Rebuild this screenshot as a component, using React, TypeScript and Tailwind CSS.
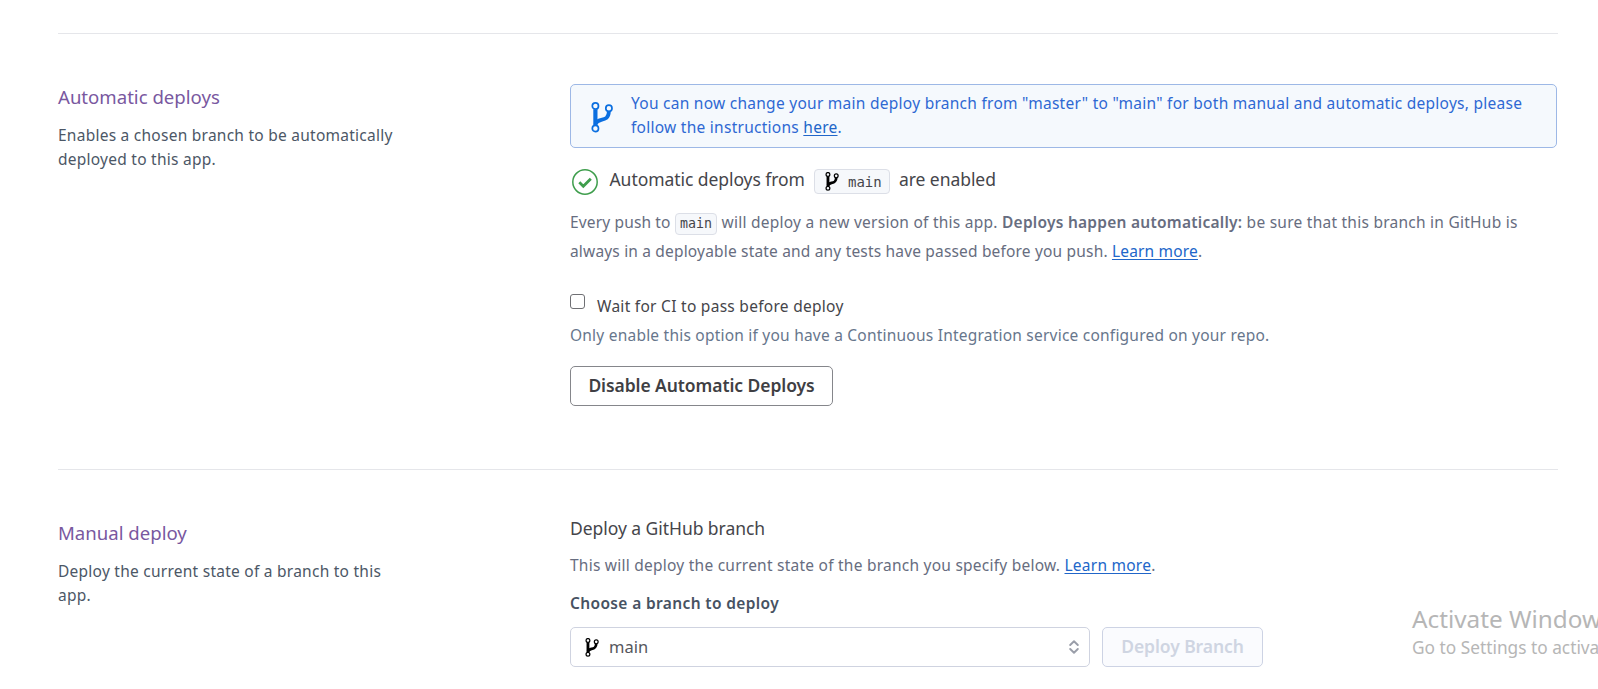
import React from "react";

function BranchIcon({ className, bold = false }: { className?: string; bold?: boolean }) {
  return (
    <svg viewBox="0 0 22 31" fill="none" stroke="currentColor" className={className}>
      <path d="M4.4 7.2V23.2" strokeWidth={bold ? 4.6 : 4.2} />
      <path d="M17.9 9.2c-.2 7-3.700 7.800-7.600 8.600-3.200.7-5 1.600-5.800 4.200" strokeWidth={bold ? 4.4 : 3.8} />
      <circle cx="4.400" cy="4" r="3.100" strokeWidth={bold ? 2 : 1.7} />
      <circle cx="17.900" cy="6.300" r="3.100" strokeWidth={bold ? 2 : 1.7} />
      <circle cx="4.400" cy="26.500" r="3.100" strokeWidth={bold ? 2 : 1.7} />
    </svg>
  );
}

function CheckIcon() {
  return (
    <svg viewBox="0 0 26 26" fill="none" className="h-[26px] w-[26px] text-[#3f9e4d]" stroke="currentColor">
      <circle cx="13" cy="13" r="12.200" strokeWidth="1.500" />
      <path d="M7.300 13.300l4 3.900 7.500-7.500" strokeWidth="2.800" />
    </svg>
  );
}

function SortIcon() {
  return (
    <svg viewBox="0 0 10 14" fill="none" stroke="currentColor" strokeWidth="1.900" strokeLinecap="round" strokeLinejoin="round" className="h-[14px] w-[10px] text-[#9a9ea9]">
      <path d="M1.200 5L5 1.300 8.800 5" />
      <path d="M1.200 9L5 12.700 8.800 9" />
    </svg>
  );
}

function Link({ children }: { children: React.ReactNode }) {
  return (
    <a href="#" className="text-[#2166c9] underline decoration-1 underline-offset-[1.5px]">
      {children}
    </a>
  );
}

function Section({ title, lines, children }: { title: string; lines: string[]; children: React.ReactNode }) {
  return (
    <section className="flex border-t border-[#e5e6ea] pt-[50px]">
      <div className="w-[512px] shrink-0">
        <h2 className="pt-px text-[18.6px] leading-6 text-[#79589f]">{title}</h2>
        <p className="mt-[14px] text-[15.5px] leading-6 tracking-[0.25px] text-[#4c5766]">
          {lines.map((line) => (
            <span key={line} className="block">
              {line}
            </span>
          ))}
        </p>
      </div>
      <div className="w-[987px] shrink-0">{children}</div>
    </section>
  );
}

export default function App() {
  return (
    <div className="relative h-[689px] w-full overflow-hidden bg-white pt-[33px] pl-[58px] font-['Noto_Sans',sans-serif] whitespace-nowrap">
      <main className="w-[1500px]">
        <div className="h-[436px]">
          <Section title="Automatic deploys" lines={["Enables a chosen branch to be automatically", "deployed to this app."]}>
            <div className="flex h-16 rounded-[5px] border border-[#9db8e6] bg-[#f5f9fd] pt-1.5 text-[#2e68d3]">
              <BranchIcon className="mt-[11px] ml-5 h-[31px] w-[22px] text-[#0b6fe0]" />
              <p className="ml-[18px] text-[15.5px] leading-6 tracking-[0.265px]">
                You can now change your main deploy branch from "master" to "main" for both manual and automatic deploys, please
                <br />
                follow the instructions <Link>here</Link>.
              </p>
            </div>
            <div className="mt-[19px] flex h-7 items-start text-[17.5px] leading-6 tracking-[-0.06px] text-[#45454a]">
              <div className="mt-0.5 ml-0.5">
                <CheckIcon />
              </div>
              <span className="ml-[11.5px] w-[195px]">Automatic deploys from</span>
              <span className="mt-0.5 ml-[9.5px] flex h-[25px] w-[76px] items-center rounded-[4px] border border-[#dcdfe7] bg-[#f6f8fb] pl-2.5">
                <BranchIcon bold className="h-[19px] w-[14px] text-black" />
                <span className="ml-[9px] font-['DejaVu_Sans_Mono',monospace] text-[14px] leading-5 tracking-normal">main</span>
              </span>
              <span className="ml-[9px]">are enabled</span>
            </div>
            <div className="mt-[13px] text-[15.5px] leading-[29px] tracking-[0.25px] text-[#676d80]">
              <p className="flex h-[29px] items-start">
                <span className="w-[105px] tracking-[0.15px]">Every push to</span>
                <code className="mt-[5px] flex h-[22px] w-[42px] items-center justify-center rounded-[4px] border border-[#dcdfe7] bg-[#f6f8fb] font-['DejaVu_Sans_Mono',monospace] text-[13.3px] leading-5 tracking-normal text-[#45454a]">
                  main
                </code>
                <span className="ml-[4.5px]">
                  will deploy a new version of this app. <strong className="font-semibold">Deploys happen automatically:</strong> be sure that this branch in GitHub is
                </span>
              </p>
              <p className="tracking-[0.175px]">
                always in a deployable state and any tests have passed before you push. <Link>Learn more</Link>.
              </p>
            </div>
            <label className="mt-[28px] flex items-start text-[15.5px] leading-6 text-[#45454a]">
              <input type="checkbox" className="h-[15px] w-[15px] appearance-none rounded-[3px] border border-[#6f7074] bg-white" />
              <span className="ml-3 tracking-[0.28px]">Wait for CI to pass before deploy</span>
            </label>
            <p className="mt-[5px] text-[15.5px] leading-6 tracking-[0.22px] text-[#67768c]">
              Only enable this option if you have a Continuous Integration service configured on your repo.
            </p>
            <button className="mt-[19px] flex h-10 w-[263px] items-center justify-center rounded-[5px] border border-[#85868b] bg-white pb-0.5 text-[17.5px] leading-6 font-semibold tracking-[-0.08px] text-[#3f3f44]">
              Disable Automatic Deploys
            </button>
          </Section>
        </div>
        <Section title="Manual deploy" lines={["Deploy the current state of a branch to this", "app."]}>
          <h3 className="-mt-1 text-[17.5px] leading-6 tracking-[-0.05px] text-[#45454a]">Deploy a GitHub branch</h3>
          <p className="mt-[13px] text-[15.5px] leading-6 tracking-[0.24px] text-[#676d80]">
            This will deploy the current state of the branch you specify below. <Link>Learn more</Link>.
          </p>
          <p className="mt-[14px] text-[15.5px] leading-6 font-semibold tracking-[0.36px] text-[#475262]">Choose a branch to deploy</p>
          <div className="mt-3 flex gap-3">
            <div className="flex h-10 w-[520px] items-center rounded-[5px] border border-[#cfd3e0] bg-white pr-[10px] pl-[14px] text-[16.5px] leading-6 text-[#55565c]">
              <BranchIcon bold className="h-[19px] w-[14px] text-black" />
              <span className="ml-2.5 flex-1">main</span>
              <SortIcon />
            </div>
            <button className="flex h-10 w-[161px] items-center justify-center rounded-[5px] border border-[#cdd3e4] bg-[#fafbfe] pb-0.5 text-[17.5px] leading-6 font-semibold tracking-[-0.08px] text-[#cfd5e2]">
              Deploy Branch
            </button>
          </div>
        </Section>
      </main>
      <aside className="pointer-events-none absolute top-[602px] left-[1412px] text-[#b6b6b6]">
        <p className="text-[24.3px] leading-[34px]">Activate Window</p>
        <p className="text-[17.3px] leading-6">Go to Settings to activa</p>
      </aside>
    </div>
  );
}
